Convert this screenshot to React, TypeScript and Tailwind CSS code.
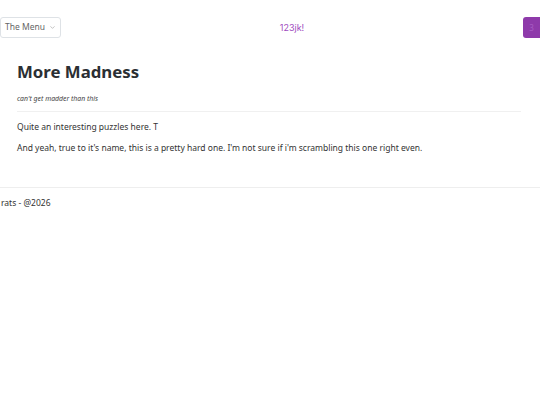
import { ChevronDown } from "lucide-react";

const App = () => {
  return (
    <div className="min-h-[405px] bg-white text-[#212529]" style={{ fontFamily: '"Noto Sans", sans-serif' }}>
      {/* top bar */}
      <header className="flex items-center justify-between h-[55px]">
        <button className="flex items-center gap-[4px] h-[21px] px-[4px] border border-[#dee2e6] rounded-[3px] text-[8.5px] text-[#666]">
          The Menu
          <ChevronDown className="w-[7px] h-[7px] text-[#999]" />
        </button>
        <span className="text-[9px] text-[#a04cc0]" style={{ fontFamily: 'Inter, sans-serif' }}>
          123jk!
        </span>
        <button className="w-[17px] h-[21px] bg-[#8e3aaa] rounded-l-[3px] text-[8px] text-[#a85cc4]">3</button>
      </header>

      <main className="px-[17px] pt-[9px] pb-[32px]">
        <h1 className="text-[16.8px] font-bold text-[#2b2f33] leading-none">More Madness</h1>
        <p className="mt-[13px] text-[6.9px] italic text-[#444]">can't get madder than this</p>
        <hr className="mt-[7px] mr-[2px] border-[#f0f0f0]" />
        <p className="mt-[9px] text-[8.5px] text-[#333]">Quite an interesting puzzles here. T</p>
        <p className="mt-[8px] text-[8.5px] text-[#333]">
          And yeah, true to it's name, this is a pretty hard one. I'm not sure if i'm scrambling this one right even.
        </p>
      </main>

      <footer className="border-t border-[#eeeeee] pt-[9px] pl-[1px]">
        <p className="text-[8.5px] text-[#333]">rats - @2026</p>
      </footer>
    </div>
  );
};

export default App;
